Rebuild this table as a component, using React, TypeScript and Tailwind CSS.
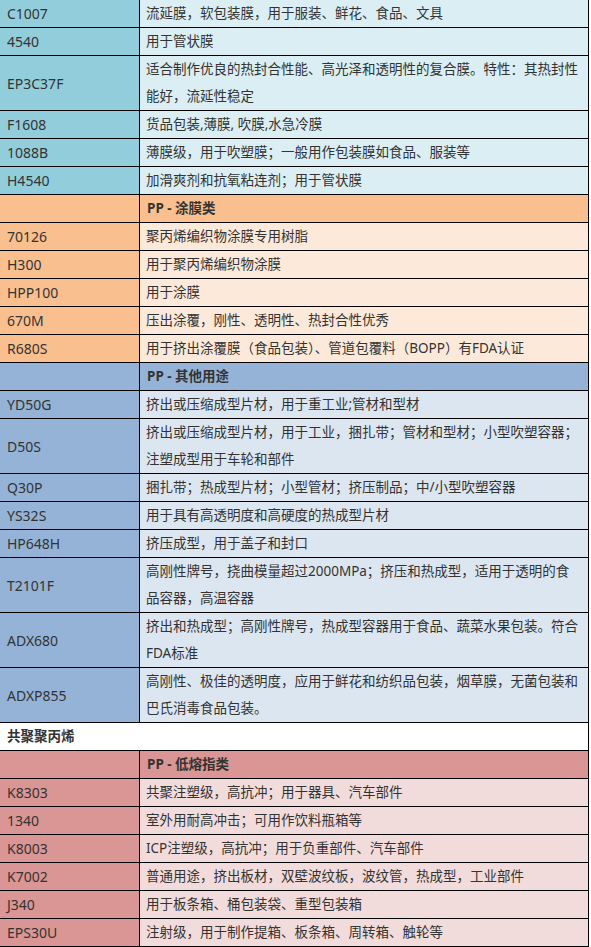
import React from 'react';

type Row = { code: string; lines: string[] };

type Section = {
    title: string;
    dark: string;
    light: string;
    rows: Row[];
};

// Excel-style palette: dark shade for code column, light shade for descriptions
const sections: Section[] = [
    {
        title: '',
        dark: 'bg-[#92cddc]',
        light: 'bg-[#daeef3]',
        rows: [
            { code: 'C1007', lines: ['流延膜，软包装膜，用于服装、鲜花、食品、文具'] },
            { code: '4540', lines: ['用于管状膜'] },
            { code: 'EP3C37F', lines: ['适合制作优良的热封合性能、高光泽和透明性的复合膜。特性：其热封性', '能好，流延性稳定'] },
            { code: 'F1608', lines: ['货品包装,薄膜, 吹膜,水急冷膜'] },
            { code: '1088B', lines: ['薄膜级，用于吹塑膜；一般用作包装膜如食品、服装等'] },
            { code: 'H4540', lines: ['加滑爽剂和抗氧粘连剂；用于管状膜'] },
        ],
    },
    {
        title: 'PP - 涂膜类',
        dark: 'bg-[#fabf8f]',
        light: 'bg-[#fde9d9]',
        rows: [
            { code: '70126', lines: ['聚丙烯编织物涂膜专用树脂'] },
            { code: 'H300', lines: ['用于聚丙烯编织物涂膜'] },
            { code: 'HPP100', lines: ['用于涂膜'] },
            { code: '670M', lines: ['压出涂覆，刚性、透明性、热封合性优秀'] },
            { code: 'R680S', lines: ['用于挤出涂覆膜（食品包装）、管道包覆料（BOPP）有FDA认证'] },
        ],
    },
    {
        title: 'PP - 其他用途',
        dark: 'bg-[#95b3d7]',
        light: 'bg-[#dce6f1]',
        rows: [
            { code: 'YD50G', lines: ['挤出或压缩成型片材，用于重工业;管材和型材'] },
            { code: 'D50S', lines: ['挤出或压缩成型片材，用于工业，捆扎带；管材和型材；小型吹塑容器；', '注塑成型用于车轮和部件'] },
            { code: 'Q30P', lines: ['捆扎带；热成型片材；小型管材；挤压制品；中/小型吹塑容器'] },
            { code: 'YS32S', lines: ['用于具有高透明度和高硬度的热成型片材'] },
            { code: 'HP648H', lines: ['挤压成型，用于盖子和封口'] },
            { code: 'T2101F', lines: ['高刚性牌号，挠曲模量超过2000MPa；挤压和热成型，适用于透明的食', '品容器，高温容器'] },
            { code: 'ADX680', lines: ['挤出和热成型；高刚性牌号，热成型容器用于食品、蔬菜水果包装。符合', 'FDA标准'] },
            { code: 'ADXP855', lines: ['高刚性、极佳的透明度，应用于鲜花和纺织品包装，烟草膜，无菌包装和', '巴氏消毒食品包装。'] },
        ],
    },
];

const lowMelt: Section = {
    title: 'PP - 低熔指类',
    dark: 'bg-[#da9694]',
    light: 'bg-[#f2dcdb]',
    rows: [
        { code: 'K8303', lines: ['共聚注塑级，高抗冲；用于器具、汽车部件'] },
        { code: '1340', lines: ['室外用耐高冲击；可用作饮料瓶箱等'] },
        { code: 'K8003', lines: ['ICP注塑级，高抗冲；用于负重部件、汽车部件'] },
        { code: 'K7002', lines: ['普通用途，挤出板材，双壁波纹板，波纹管，热成型，工业部件'] },
        { code: 'J340', lines: ['用于板条箱、桶包装袋、重型包装箱'] },
        { code: 'EPS30U', lines: ['注射级，用于制作提箱、板条箱、周转箱、触轮等'] },
    ],
};

function SectionBlock({ section }: { section: Section }) {
    return (
        <>
            {section.title && (
                <div className={`flex border-b border-black ${section.dark}`}>
                    <div className="w-[140px] shrink-0 border-r border-black" />
                    <div className="flex-1 pl-[7px] font-bold">{section.title}</div>
                </div>
            )}
            {section.rows.map((row) => (
                <div key={row.code} className="flex border-b border-black">
                    <div className={`w-[140px] shrink-0 border-r border-black pl-[7px] flex items-center text-[14px] ${section.dark}`}>
                        {row.code}
                    </div>
                    <div className={`flex-1 min-w-0 overflow-hidden pl-[6px] ${section.light}`}>
                        {row.lines.map((line, i) => (
                            <div key={i} className="whitespace-nowrap">{line}</div>
                        ))}
                    </div>
                </div>
            ))}
        </>
    );
}

export default function App() {
    return (
        <div className="bg-white min-h-[947px]">
            <div
                className="w-[589px] border-r border-black text-[13.5px] leading-[27px] text-[#333]"
                style={{ fontFamily: '"Noto Sans", "Noto Sans CJK SC", sans-serif' }}
            >
                {sections.map((s, i) => (
                    <SectionBlock key={i} section={s} />
                ))}
                <div className="border-b border-black bg-white pl-[7px] font-bold">共聚聚丙烯</div>
                <SectionBlock section={lowMelt} />
            </div>
        </div>
    );
}
